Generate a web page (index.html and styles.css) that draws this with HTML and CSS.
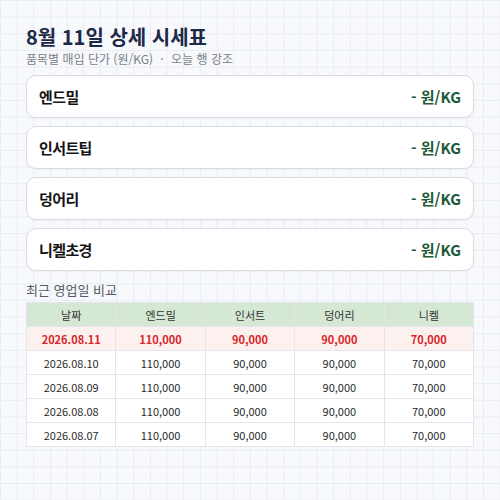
FILE: index.html
```html
<!DOCTYPE html>
<html lang="ko">

<head>
  <meta charset="UTF-8">
  <meta name="viewport" content="width=device-width, initial-scale=1.0">
  <title>8월 11일 상세 시세표</title>
  <link rel="stylesheet" href="styles.css">
</head>

<body>
  <div class="page">
    <h1 class="title">8월 11일 상세 시세표</h1>
    <p class="sub">품목별 매입 단가 (원/KG) <span class="dot">·</span> 오늘 행 강조</p>

    <div class="cards">
      <div class="card"><span class="name">엔드밀</span><span class="price">- 원/KG</span></div>
      <div class="card"><span class="name">인서트팁</span><span class="price">- 원/KG</span></div>
      <div class="card"><span class="name">덩어리</span><span class="price">- 원/KG</span></div>
      <div class="card"><span class="name">니켈초경</span><span class="price">- 원/KG</span></div>
    </div>

    <p class="section">최근 영업일 비교</p>
    <table class="history">
      <thead>
        <tr><th>날짜</th><th>엔드밀</th><th>인서트</th><th>덩어리</th><th>니켈</th></tr>
      </thead>
      <tbody>
        <tr class="today"><td>2026.08.11</td><td>110,000</td><td>90,000</td><td>90,000</td><td>70,000</td></tr>
        <tr><td>2026.08.10</td><td>110,000</td><td>90,000</td><td>90,000</td><td>70,000</td></tr>
        <tr><td>2026.08.09</td><td>110,000</td><td>90,000</td><td>90,000</td><td>70,000</td></tr>
        <tr><td>2026.08.08</td><td>110,000</td><td>90,000</td><td>90,000</td><td>70,000</td></tr>
        <tr><td>2026.08.07</td><td>110,000</td><td>90,000</td><td>90,000</td><td>70,000</td></tr>
      </tbody>
    </table>
  </div>
</body>

</html>
```

FILE: styles.css
```css
body {
  margin: 0;
  font-family: "Noto Sans CJK KR", "Noto Sans", sans-serif;
  color: #222;
  background-color: #f8f9fc;
  background-image:
    linear-gradient(#e9ecf2 1px, transparent 1px),
    linear-gradient(90deg, #e9ecf2 1px, transparent 1px);
  background-size: 16.67px 16.67px;
  min-height: 500px;
}

.page {
  padding: 22px 26px;
}

.title {
  margin: 0;
  font-size: 20px;
  line-height: 29px;
  font-weight: 700;
  color: #1c2a48;
}

.sub {
  margin: 0;
  font-size: 12px;
  line-height: 16px;
  color: #7a7f88;
}

.sub .dot {
  margin: 0 4px;
}

/* 품목 카드 */
.cards {
  margin-top: 8px;
  display: flex;
  flex-direction: column;
  gap: 8px;
}

.card {
  height: 41px;
  padding: 0 12px;
  display: flex;
  align-items: center;
  justify-content: space-between;
  background: #fff;
  border: 1px solid #d8dce4;
  border-radius: 10px;
  box-shadow: 0 1px 2px rgba(0, 0, 0, 0.04);
}

.name {
  font-size: 15px;
  font-weight: 700;
  letter-spacing: -0.6px;
  color: #141414;
}

.price {
  font-size: 15px;
  font-weight: 700;
  color: #1d5a3a;
}

.section {
  margin: 10px 0 3px;
  font-size: 13px;
  line-height: 18px;
  color: #555a62;
}

/* 비교 표 */
.history {
  width: 100%;
  border-collapse: collapse;
  table-layout: fixed;
  background: #fff;
  font-size: 11px;
}

.history th,
.history td {
  height: 23px;
  padding: 0;
  text-align: center;
  border: 1px solid #e3e5ea;
  color: #2a2a2a;
}

.history th {
  background: #d5e8d3;
  font-weight: 400;
  color: #333;
}

.history .today td {
  background: #fdf1f0;
  color: #d8262b;
  font-weight: 700;
}
```
